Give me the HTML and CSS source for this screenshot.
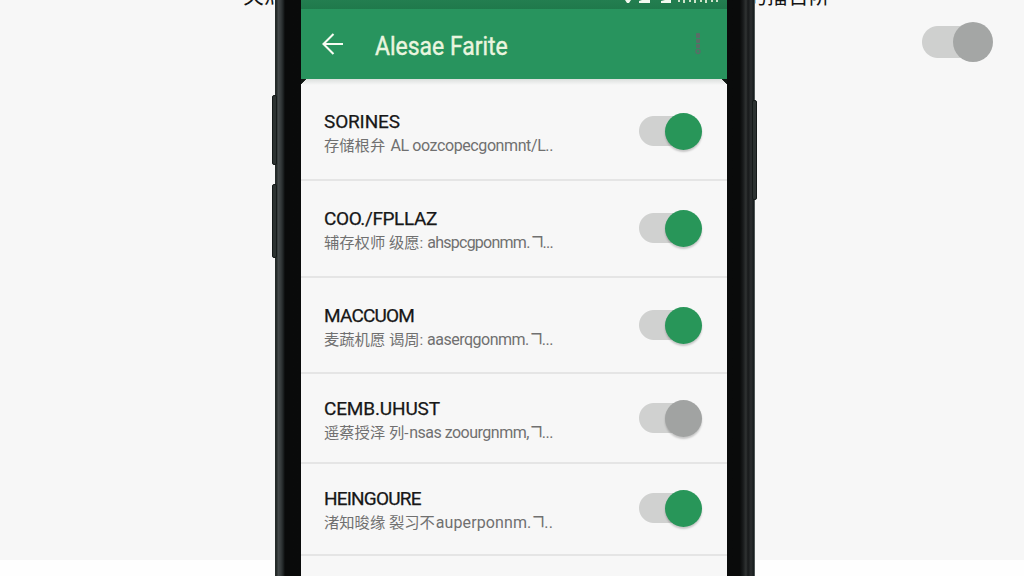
FILE: index.html
```html
<!DOCTYPE html>
<html lang="zh">
<head>
<meta charset="utf-8">
<title>Alesae Farite</title>
<link rel="stylesheet" href="styles.css">
</head>
<body>
<div class="stage">
  <div class="side side-left"><span class="caption">关灬</span></div>
  <div class="phone">
    <i class="key key-up"></i><i class="key key-down"></i><i class="key key-power"></i>
    <div class="screen">
      <div class="status">
        <svg width="100" height="9" viewBox="0 0 100 9"><g fill="#f2f8ef"><path d="M0 0h6L4 3H2zM17 0h8v3H14V1zM40 0h6v3H36V1z"/><path d="M54 0v2M59 0v3M65 0v2M70 0v3M76 0v2M81 0v3M87 0v2M92 0v2" stroke="#cfe3c9" stroke-width="2"/></g></svg>
      </div>
      <header class="appbar">
        <svg class="back" width="22" height="22" viewBox="0 0 22 22"><path d="M21 11H1.5M11.5 1L1.5 11l10 10" fill="none" stroke="#f7fcf2" stroke-width="2.1"/></svg>
        <h1 class="heading">Alesae Farite</h1>
        <svg class="more" width="6" height="22" viewBox="0 0 6 22"><g fill="#596d67"><rect x="1" y="0" width="4" height="5" rx="1"/><rect x="1" y="6" width="4" height="4" rx="1"/><rect x="1" y="11" width="4" height="4" rx="1"/></g><circle cx="3" cy="18.5" r="1.9" fill="none" stroke="#596d67" stroke-width="1.5"/></svg>
      </header>
      <main class="list">
        <section class="row r1"><div class="text"><h2>SORINES</h2><p><span class="han">存储根弁</span><span class="latin">AL oozcopecgonmnt/L..</span></p></div><div class="toggle on"><i class="knob"></i></div></section>
        <section class="row r2"><div class="text"><h2>COO./FPLLAZ</h2><p><span class="han">辅存权师 级愿:</span><span class="latin">ahspcgponmm.<b>ㄱ</b>...</span></p></div><div class="toggle on"><i class="knob"></i></div></section>
        <section class="row r3"><div class="text"><h2>MACCUOM</h2><p><span class="han">麦蔬机愿 谒周:</span><span class="latin">aaserqgonmm.<b>ㄱ</b>...</span></p></div><div class="toggle on"><i class="knob"></i></div></section>
        <section class="row r4"><div class="text"><h2>CEMB.UHUST</h2><p><span class="han">遥蔡授泽 列-</span><span class="latin">nsas zoourgnmm,<b>ㄱ</b>...</span></p></div><div class="toggle"><i class="knob"></i></div></section>
        <section class="row r5"><div class="text"><h2>HEINGOURE</h2><p><span class="han">渚知晙缘 裂习不</span><span class="latin">auperponnm.<b>ㄱ</b>..</span></p></div><div class="toggle on"><i class="knob"></i></div></section>
      </main>
    </div>
  </div>
  <div class="side side-right"><span class="caption">的播台阶</span><div class="toggle large"><i class="knob"></i></div></div>
</div>
</body>
</html>
```
FILE: styles.css
```css
* { box-sizing: border-box; }
body { margin: 0; overflow: hidden; font-family: Roboto, "Noto Sans CJK SC", sans-serif; }
.stage {
  display: grid;
  grid-template-columns: 275px 480px 1fr;
  height: 576px;
  background: linear-gradient(#f7f7f7 560px, #fefefe 560px);
}
.side { display: flex; height: 576px; overflow: hidden; }
.side-left { justify-content: flex-end; }
.side-right { justify-content: space-between; padding-right: 31px; }
.caption { margin-top: -14px; font-size: 21px; line-height: 21px; height: 24px; color: #151515; white-space: nowrap; }
.side-left .caption { margin-right: -10px; }
.side-right .caption { margin-left: -9px; }

.phone {
  position: relative;
  height: 576px;
  padding: 0 28px 0 26px;
  background: linear-gradient(90deg, #252b2a 0 2px, #454b4c 3px, #34393a 6px, #202526 8px, #090a0a 10px, #0a0b0b 465px, #181a1b 468px, #303333 471px, #17191a 473px, #2b2e2f 476px, #151b1c 479px, #88908f 480px);
}
.key { position: absolute; background: #2c3231; border: 1px solid #151a19; border-radius: 2px; }
.key-up { left: -3px; top: 95px; width: 5px; height: 70px; }
.key-down { left: -3px; top: 184px; width: 5px; height: 74px; }
.key-power { left: 477px; top: 100px; width: 5px; height: 100px; }
.screen { height: 576px; background: #f7f7f7; }
.status { display: flex; justify-content: flex-end; height: 9px; padding-right: 2px; background: linear-gradient(#237e50, #1f794b); }
.appbar { display: flex; align-items: center; height: 70px; padding: 0 26px 0 21px; background: #28945e; }
.heading { flex: 1; margin: 3px 0 0 31px; font-size: 25.5px; font-weight: 400; line-height: 32px; color: #eaf5df; -webkit-text-stroke: .4px #eaf5df; transform: scaleX(.9); transform-origin: left; }
.more { display: block; }

.list {
  background:
    linear-gradient(135deg, #101713 3.5px, transparent 4px) 0 0 / 6px 6px no-repeat,
    linear-gradient(225deg, #101713 3.5px, transparent 4px) 100% 0 / 6px 6px no-repeat,
    linear-gradient(#dcdfdd, #f7f7f7 6px);
}
.row { display: flex; justify-content: space-between; align-items: flex-start; padding: 0 25px 0 23px; border-bottom: 2px solid #e5e5e5; }
.r1 { height: 102px; padding-top: 31px; }
.r2 { height: 97px; padding-top: 26px; }
.r3 { height: 96px; padding-top: 26px; }
.r4 { height: 90px; padding-top: 23px; }
.r5 { height: 92px; padding-top: 23px; }
h2 { margin: 0; font-size: 19px; line-height: 24px; font-weight: 400; color: #171717; -webkit-text-stroke: .25px #171717; white-space: nowrap; letter-spacing: -.15px; }
.r2 h2 { letter-spacing: -.4px; }
.r3 h2, .r5 h2 { letter-spacing: -.8px; }
.row p { display: flex; justify-content: space-between; width: 229px; margin: 0; font-size: 16px; line-height: 24px; color: #707070; white-space: nowrap; }
.han { font-size: 15.3px; }
.latin { letter-spacing: -.4px; }
.r2 .latin { letter-spacing: -.75px; }
.r3 .latin { letter-spacing: -.5px; }
.r4 .latin { letter-spacing: -.5px; }
.r5 .latin { letter-spacing: .1px; }
.latin b { display: inline-block; width: 13px; font-weight: 400; font-size: 16px; transform: scale(1.1, 1.4); transform-origin: 50% 50%; }

.toggle { width: 63px; height: 37px; margin-top: 3px; padding: 3px 0 0 26px; background: radial-gradient(circle at 15px 18px, #d0d1d0 14.5px, transparent 15.5px) no-repeat, linear-gradient(#d0d1d0, #d0d1d0) 15px 3px / 35px 30px no-repeat; }
.toggle.on .knob { background: #289659; }
.knob { display: block; width: 37px; height: 37px; margin-top: -3px; border-radius: 50%; background: #a1a3a2; box-shadow: 0 2px 2px rgba(0,0,0,.2); }
.toggle.large { width: 71px; height: 40px; margin-top: 22px; padding-left: 31px; background: radial-gradient(circle at 16px 20px, #cfd0cf 15.5px, transparent 16.5px) no-repeat, linear-gradient(#cfd0cf, #cfd0cf) 16px 4px / 38px 32px no-repeat; }
.large .knob { width: 40px; height: 40px; box-shadow: none; background: #a4a6a5; }
```
